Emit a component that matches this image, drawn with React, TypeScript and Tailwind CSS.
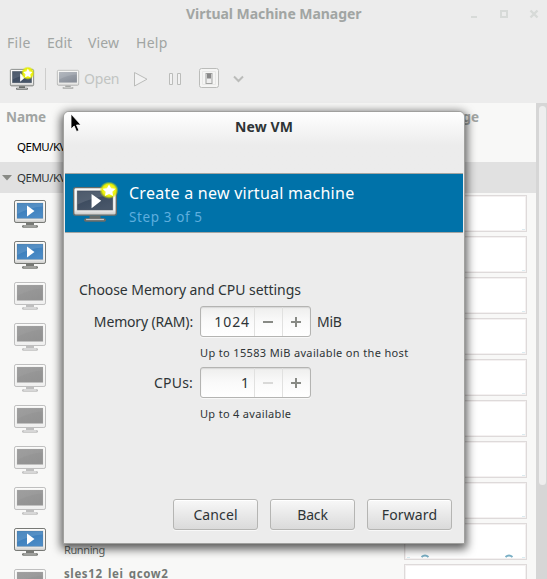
import React from "react";

type Kind = "running" | "off" | "dark" | "dim";

const screens: Record<Kind, [string, string, string, string]> = {
  running: ["#3277b5", "#4b8bc6", "#777975", "#c9c9c7"],
  off: ["#9b9b9b", "#929292", "#bfbfbf", "#eeeeee"],
  dark: ["#344357", "#485669", "#686c69", "#c5c5c3"],
  dim: ["#a9afb7", "#898f99", "#a5a7a5", "#d9d9d7"],
};

function Monitor({ kind, star = "", play = false, className }: { kind: Kind; star?: "" | "small" | "large"; play?: boolean; className: string }) {
  const [top, bottom, edge, foot] = screens[kind];
  const id = `${kind}-${star}`;
  return (
    <svg viewBox="0 0 32 28" overflow="visible" preserveAspectRatio="none" className={className}>
      <defs>
        <linearGradient id={`scr-${id}`} x1="0" y1="0" x2="0.6" y2="1">
          <stop stopColor={top} />
          <stop offset="1" stopColor={bottom} />
        </linearGradient>
        <linearGradient id={`case-${id}`} x1="0" y1="0" x2="0" y2="1">
          <stop stopColor="#fbfbfa" />
          <stop offset="0.8" stopColor="#f3f3f2" />
          <stop offset="1" stopColor={foot} />
        </linearGradient>
        <radialGradient id={`glow-${id}`}>
          <stop stopColor="#ffff90" />
          <stop offset="0.7" stopColor="#e9ef00" />
          <stop offset="1" stopColor="#d0e600" stopOpacity="0" />
        </radialGradient>
      </defs>
      <path d="M12 23h8v2h3l1 1v1l-1 .7H9L8 27v-1l1-1h3z" fill={edge} />
      <path d="M9.500 25.500h13v1h-13z" fill={foot} />
      <rect x="0.5" y="0.5" width="31" height="22" rx="1.6" fill={`url(#case-${id})`} stroke={edge} />
      <rect x="3" y="3" width="26" height="15.5" fill={`url(#scr-${id})`} stroke={edge} strokeOpacity="0.35" strokeWidth="0.6" />
      <path d="M3.3 3.3h25.4v3.2Q15 7.5 3.3 14z" fill="#fff" opacity={kind === "off" ? 0.04 : 0.12} />
      {play && <path d={star ? "M13.500 5.600L20.500 11 13.500 17z" : "M13 5.400L20.500 11 13 16.500z"} fill="#fff" />}
      {star && (
        <g transform={star === "small" ? "translate(23.800 5.500) scale(1.300)" : "translate(26.200 2.600)"}>
          <circle r="7" fill={`url(#glow-${id})`} />
          <path d="M0-4.700l1.500 3 3.300.5-2.400 2.400.6 3.300-3-1.600-3 1.600.6-3.300-2.400-2.400 3.300-.5z" fill="#fff" />
        </g>
      )}
    </svg>
  );
}

function Spin({ value, minusOff = false }: { value: string; minusOff?: boolean }) {
  return (
    <div className="flex h-[31px] w-[111px] rounded-[3px] border border-[#b4b4b2] bg-gradient-to-b from-[#eeeeed] via-[#fafafa] to-white shadow-[0_1px_0_#f8f8f8,inset_0_1px_1px_#d8d8d8]">
      <span className="w-[53px] pr-[4px] text-right text-[14px] leading-[29px] tracking-[0.9px]">{value}</span>
      <span className="flex w-[28px] items-center border-l border-[#e1e1e0] pl-[8px]">
        <i className={minusOff ? "h-[2px] w-[10px] bg-[#d9d9d8]" : "h-[2px] w-[10px] bg-[#888a85]"} />
      </span>
      <span className="flex flex-1 items-center border-l border-[#e1e1e0] pl-[8px]">
        <svg viewBox="0 0 10 10" className="size-[10px]"><path d="M4 0h2v4h4v2H6v4H4V6H0V4h4z" fill="#888a85" /></svg>
      </span>
    </div>
  );
}

function Button({ children, className }: { children: string; className: string }) {
  return (
    <button className={`h-[31px] w-[85px] rounded-[3px] border border-[#b5b5b3] bg-gradient-to-b from-[#f8f8f8] to-[#dadada] text-[14px] leading-[29px] shadow-[0_1px_0_#f8f8f8,inset_0_1px_0_#fff] ${className}`}>
      {children}
    </button>
  );
}

const rows: Kind[] = ["running", "running", "off", "off", "off", "off", "off", "off", "running", "off"];

export default function App() {
  return (
    <div className="relative flex h-[579px] w-[547px] flex-col overflow-hidden bg-[#f8f8f7] font-['Noto_Sans',sans-serif] whitespace-nowrap text-[#2e3436]">
      <header className="h-[103px] shrink-0 bg-[#ececec] text-[#a1a5a3]">
        <div className="flex h-[28px]">
          <h1 className="ml-[186px] w-[283px] text-[14px] leading-[27px] font-bold tracking-[-0.05px]">Virtual Machine Manager</h1>
          <svg viewBox="0 0 78 28" className="h-[28px] w-[78px]" fill="none" stroke="#d7dad8">
            <path d="M2 17h6" strokeWidth="2" />
            <path d="M32 11h6v6h-6z" strokeWidth="2" />
            <path d="M61.500 10.500l7 7M68.500 10.500l-7 7" strokeWidth="2.400" />
          </svg>
        </div>
        <nav className="flex h-[31px] text-[14px] leading-[30px]">
          <span className="ml-[7px] w-[40px] tracking-[0.300px]">File</span>
          <span className="w-[41px]">Edit</span>
          <span className="w-[48px] tracking-[0.100px]">View</span>
          <span className="tracking-[0.300px]">Help</span>
        </nav>
        <div className="flex h-[44px] items-start pt-[5px] text-[#c1c4c2]">
          <Monitor kind="dark" star="small" play className="mt-[5px] ml-[10px] h-[21px] w-[24px]" />
          <i className="mt-[4px] ml-[11px] h-[22px] w-px bg-[#cdcdcc]" />
          <Monitor kind="dim" className="mt-[6px] ml-[11px] h-[19px] w-[22px]" />
          <span className="ml-[5px] w-[48px] text-[14px] leading-[30px] tracking-[-0.200px]">Open</span>
          <svg viewBox="0 0 120 30" className="h-[30px] w-[120px]" fill="#f2f2f2" stroke="#bbbcba">
            <path d="M2.500 8.500v13.500L15 15.200z" />
            <path d="M37.500 9.500h3v11h-3zM45.500 9.500h3v11h-3z" />
            <rect x="67.500" y="4.500" width="19" height="19" rx="2" fill="#f5f5f4" />
            <path d="M70.500 7.500h13v13h-13z" fill="none" stroke="#e8e8e7" />
            <rect x="74" y="9.500" width="6" height="10" fill="#eee" stroke="#a2a3a1" />
            <rect x="75" y="9.500" width="4" height="5" fill="#888" stroke="none" />
            <path d="M102 12.500l4.500 4.500 4.500-4.500" fill="none" strokeWidth="2" />
          </svg>
        </div>
      </header>

      <div className="flex h-[476px]">
        <main className="w-[536px]">
          <div className="flex h-[28px] text-[13.500px] leading-[29px] font-bold text-[#a1a5a3]">
            <span className="ml-[6px] w-[395px] tracking-[-0.050px]">Name</span>
            <span className="w-[78px] text-right">CPU usage</span>
          </div>
          <div className="h-[31px] pl-[17px] text-[11.500px] leading-[32px] tracking-[-0.500px] text-black">QEMU/KVM</div>
          <div className="flex h-[31px] items-center bg-[#e1e1e1] text-[11.500px] leading-[32px] tracking-[-0.500px]">
            <svg viewBox="0 0 10 6" className="ml-[2px] h-[6px] w-[10px]"><path d="M0 0h10L5 5.500z" fill="#888a85" /></svg>
            <span className="ml-[5px] pt-px">QEMU/KVM</span>
          </div>
          {rows.map((kind, i) => (
            <div key={i} className="flex h-[41px]">
              <Monitor kind={kind} play={kind === "running"} className="mt-[7px] ml-[14px] h-[28px] w-[32px] shrink-0" />
              <div className="ml-[18px] w-[340px] text-[11px] text-[#616664]">
                {i === 8 && <div className="pt-[19px] leading-[20px] tracking-[-0.400px]">Running</div>}
                {i === 9 && <div className="text-[11.500px] leading-[23px] font-bold tracking-[0.600px] text-[#747875]">sles12_lei_qcow2</div>}
              </div>
              <div className="mt-[2px] h-[37px] w-[123px] border border-[#dedada] bg-white shadow-[inset_0_0_0_1px_#f4f1f1]">
                {i === 8 && (
                  <svg viewBox="0 0 121 35" className="h-[35px] w-[121px]" fill="none" stroke="#79afc5">
                    <path d="M16.500 33q3.500-3 7 0M100.500 33q3.500-3 7 0" strokeWidth="2" />
                    <path d="M2 33.500h3M117 33.500h3" stroke="#d9edf3" />
                  </svg>
                )}
                {i !== 8 && <i className="mt-[33px] ml-[117px] block h-px w-[3px] bg-[#dcebf0]" />}
              </div>
            </div>
          ))}
        </main>
        <aside className="w-[11px] bg-[#d6d6d6] pt-[3px] pl-[3px]">
          <div className="h-[379px] w-[7px] rounded-full bg-[#eeeeee]" />
        </aside>
      </div>

      <section className="absolute top-[111px] left-[63px] flex h-[433px] w-[402px] flex-col rounded-t-[6px] border border-[#a0a09e] bg-[#ececec] shadow-[0_3px_10px_2px_rgba(0,0,0,0.65)]">
        <header className="h-[61px] rounded-t-[5px] bg-gradient-to-b from-white to-[#ececec] to-55% pl-[171px] text-[14px] leading-[30px] font-bold tracking-[0.100px]">New VM</header>
        <div className="mr-px ml-px flex h-[60px] border-y border-[#a4a5a2] bg-[#0072a9] pl-[8px]">
          <Monitor kind="dark" star="large" play className="mt-[13px] h-[35px] w-[44px]" />
          <div className="ml-[12px]">
            <h2 className="pt-[7px] text-[16px] leading-[24px] tracking-[0.260px] text-white">Create a new virtual machine</h2>
            <p className="text-[13.500px] leading-[24px] tracking-[0.600px] text-[#5eaede]">Step 3 of 5</p>
          </div>
        </div>
        <div className="pt-[46px] pl-[15px] text-[14px]">
          <h3 className="leading-[22px] tracking-[-0.060px]">Choose Memory and CPU settings</h3>
          <div className="mt-[5px] flex items-center">
            <label className="mr-[7px] w-[114px] text-right tracking-[-0.160px]">Memory (RAM):</label>
            <Spin value="1024" />
            <span className="ml-[6px] tracking-[-0.300px]">MiB</span>
          </div>
          <p className="ml-[121px] h-[30px] text-[11px] leading-[31px] tracking-[0.350px]">Up to 15583 MiB available on the host</p>
          <div className="flex items-center">
            <label className="mr-[7px] w-[114px] text-right tracking-[0.200px]">CPUs:</label>
            <Spin value="1" minusOff />
          </div>
          <p className="ml-[121px] h-[30px] text-[11px] leading-[31px] tracking-[0.320px]">Up to 4 available</p>
        </div>
        <footer className="mt-auto mb-[13px] flex gap-[12px] pl-[109px]">
          <Button className="tracking-[0.100px]">Cancel</Button>
          <Button className="tracking-[-0.200px]">Back</Button>
          <Button className="tracking-[0.150px]">Forward</Button>
        </footer>
      </section>

      <svg viewBox="0 0 12 20" className="absolute top-[113px] left-[70px] h-[20px] w-[12px]">
        <path d="M1 1v15l3.200-3 2.300 5.500 2.500-1-2.500-5.500H11z" fill="#000" stroke="#fff" strokeWidth="0.8" />
      </svg>
    </div>
  );
}
